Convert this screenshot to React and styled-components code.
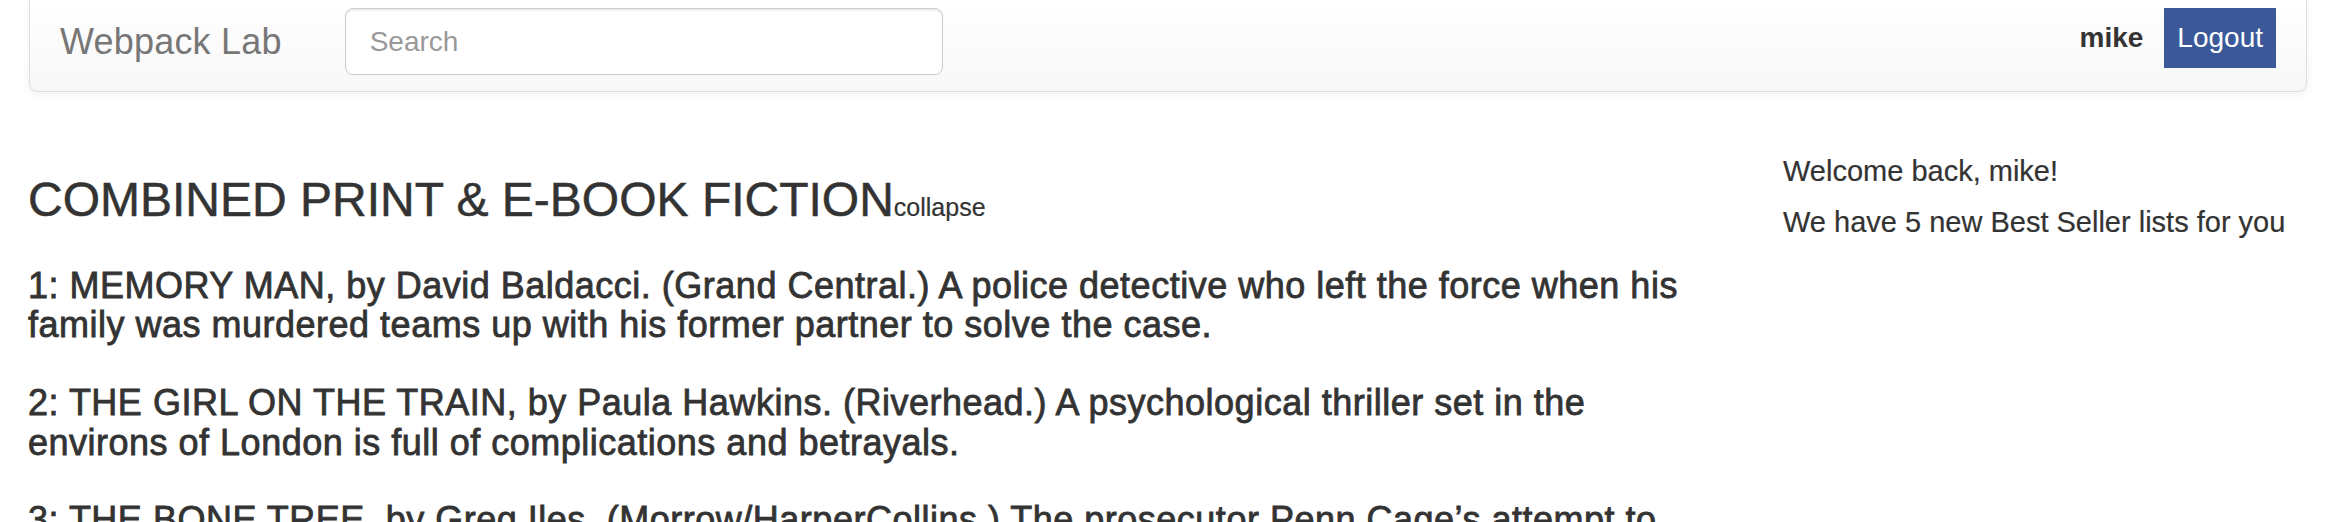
import React from "react";
import styled, { createGlobalStyle } from "styled-components";

const GlobalStyle = createGlobalStyle`
  html, body { margin: 0; padding: 0; background: #ffffff; }
  body {
    font-family: "Liberation Sans", Arial, Helvetica, sans-serif;
    color: #333333;
  }
  * { box-sizing: border-box; }
`;

const Page = styled.div`
  padding: 0 24px 0 28px;
`;

const Navbar = styled.nav`
  display: flex;
  align-items: center;
  height: 92px;
  margin-left: 1px;
  padding: 0 30px 8px 30px;
  background: linear-gradient(to bottom, #ffffff 0%, #f7f7f7 100%);
  border: 1px solid #dedede;
  border-top: none;
  border-radius: 0 0 8px 8px;
  box-shadow: 0 2px 8px rgba(0, 0, 0, 0.06);
`;

const Brand = styled.a`
  font-size: 36px;
  line-height: 40px;
  letter-spacing: 0.2px;
  color: #777777;
  text-decoration: none;
`;

const SearchInput = styled.input`
  margin-left: 63px;
  width: 598px;
  height: 67px;
  padding: 0 24px;
  font-family: inherit;
  font-size: 28px;
  color: #555555;
  background: #ffffff;
  border: 1px solid #cccccc;
  border-radius: 8px;
  box-shadow: inset 0 2px 2px rgba(0, 0, 0, 0.075);
  outline: none;
  &::placeholder { color: #999999; }
`;

const UserArea = styled.div`
  margin-left: auto;
  display: flex;
  align-items: center;
  gap: 21px;
  margin-bottom: 8px;
`;

const UserName = styled.strong`
  font-size: 28px;
  font-weight: bold;
  color: #333333;
`;

const LogoutButton = styled.button`
  height: 60px;
  padding: 0 13px;
  font-family: inherit;
  font-size: 28px;
  color: #ffffff;
  background: #3b5998;
  border: none;
  border-radius: 0;
  cursor: pointer;
`;

const Content = styled.div`
  display: grid;
  grid-template-columns: 1690px 1fr;
  column-gap: 65px;
  margin-top: 40px;
`;

const Main = styled.main`
  min-width: 0;
`;

const ListTitle = styled.h3`
  margin: 42px 0 0;
  font-size: 48px;
  line-height: 52.8px;
  font-weight: normal;
  color: #333333;
  -webkit-text-stroke: 0.5px #333333;
`;

const CollapseToggle = styled.span`
  font-size: 25px;
  -webkit-text-stroke: 0.2px #333333;
  cursor: pointer;
`;

const BookList = styled.div`
  display: flex;
  flex-direction: column;
  gap: 38px;
  margin-top: 32px;
`;

const BookItem = styled.h4`
  margin: 0;
  font-size: 36px;
  line-height: 39.6px;
  font-weight: normal;
  letter-spacing: 0.5px;
  color: #333333;
  -webkit-text-stroke: 0.8px #333333;
`;

const Sidebar = styled.aside`
  margin-top: 19px;
`;

const SideText = styled.p`
  margin: 0 0 11px;
  font-size: 29px;
  line-height: 40px;
  color: #333333;
  -webkit-text-stroke: 0.2px #333333;
`;

const books = [
  "1: MEMORY MAN, by David Baldacci. (Grand Central.) A police detective who left the force when his family was murdered teams up with his former partner to solve the case.",
  "2: THE GIRL ON THE TRAIN, by Paula Hawkins. (Riverhead.) A psychological thriller set in the environs of London is full of complications and betrayals.",
  "3: THE BONE TREE, by Greg Iles. (Morrow/HarperCollins.) The prosecutor Penn Cage\u2019s attempt to save his father, who is accused of murder, leads him to a dangerous secret.",
];

export default function App() {
  return (
    <>
      <GlobalStyle />
      <Page>
        <Navbar>
          <Brand href="#">Webpack Lab</Brand>
          <SearchInput type="text" placeholder="Search" />
          <UserArea>
            <UserName>mike</UserName>
            <LogoutButton>Logout</LogoutButton>
          </UserArea>
        </Navbar>
        <Content>
          <Main>
            <ListTitle>
              COMBINED PRINT &amp; E-BOOK FICTION
              <CollapseToggle>collapse</CollapseToggle>
            </ListTitle>
            <BookList>
              {books.map((b) => (
                <BookItem key={b}>{b}</BookItem>
              ))}
            </BookList>
          </Main>
          <Sidebar>
            <SideText>Welcome back, mike!</SideText>
            <SideText>We have 5 new Best Seller lists for you</SideText>
          </Sidebar>
        </Content>
      </Page>
    </>
  );
}
